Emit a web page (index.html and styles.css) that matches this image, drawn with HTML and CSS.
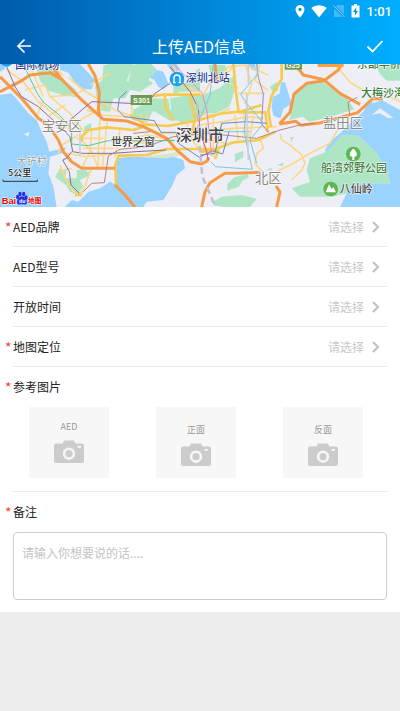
FILE: index.html
```
<!DOCTYPE html>
<html lang="zh-CN">
<head>
    <meta charset="UTF-8">
    <meta name="viewport" content="width=device-width, initial-scale=1">
    <title>上传AED信息</title>
    <link rel="stylesheet" href="styles.css">
</head>
<body>
    <header class="header">
        <div class="status">
            <svg width="10" height="14" viewBox="0 0 10 14"><path fill="#fff" fill-rule="evenodd" d="M5 1a4.500 4.500 0 0 0-4.500 4.500C.5 9 5 13.500 5 13.500S9.500 9 9.500 5.500A4.500 4.500 0 0 0 5 1zm0 2.800a1.700 1.700 0 1 1 0 3.400 1.700 1.700 0 0 1 0-3.400z"/></svg>
            <svg width="16" height="14" viewBox="0 0 16 14"><path fill="#fff" d="M8 13.500L.3 4C4.500.3 11.500.3 15.700 4z"/></svg>
            <svg width="12" height="14" viewBox="0 0 12 14"><path fill="#48b7f7" d="M4.500 1H11v9.500L3 2.500zM1 4.500l8.500 8.500H1z"/><path stroke="#8bd2fb" d="M.5 1.500l11 11.500"/></svg>
            <svg width="9" height="14" viewBox="0 0 9 14"><path fill="#fff" d="M3 0h3v1.500h2.500V13.500H.5V1.500H3z"/><path fill="#0098eb" d="M5.200 3.500L2 8h2v3.500L7 7H5.200z"/></svg>
            <span class="time">1:01</span>
        </div>
        <div class="nav">
            <button type="button" class="nav-btn" aria-label="返回">
                <svg width="16" height="16" viewBox="0 0 16 16"><path fill="none" stroke="#fff" stroke-width="1.700" d="M15 8H2M8.500 1.500L2 8l6.500 6.500"/></svg>
            </button>
            <h1>上传AED信息</h1>
            <button type="button" class="nav-btn" aria-label="提交">
                <svg width="18" height="16" viewBox="0 0 18 16"><path fill="none" stroke="#fff" stroke-width="1.800" d="M1.500 8.500l5 5L16.500 3"/></svg>
            </button>
        </div>
    </header>

    <svg class="map" viewBox="0 12 1200 429" preserveAspectRatio="xMidYMid slice">
        <rect y="12" width="1200" height="429" fill="#eeeff6"/>
        <!-- sea and lakes -->
        <g fill="#9bd3ff">
            <path d="M0 105l35-5 25 30 25 30 25 20 15 35 15 30 8 30 22-5 30-8-15 18-35 10-5 50 15 40 10 61H0z"/>
            <path d="M195 441l20-21 20 5 30-30 35-10 30-20 20 10v-80l40-5 50 2 40-7 40 5 30 10 5 25-25 20-15 35-25 40-50 5-10 16z"/>
            <path d="M1200 150l-55-30-20 8-20-3-15 30-35 30-30 30-35 30-15 25 5 15 50-60h40l30 25 30 30 30 50 10 40-70 0-40 5-20 25-20 41h185z"/>
            <path d="M180 12h60l45 48-10 28-25 0-25-20-20-30-25-8zM0 12h15v15L0 35zM340 80l15-5 15 20-20 5zM470 30l20 5 15 35-15 18-15-8-12-20-18-10zM818 110l20-8 5-35 12 0 20 65-25 15-8 28-22-8-5-25zM508 150l40-3-10 12h-20zM745 12h20l5 22-15-5z"/>
        </g>
        <path fill="#eeeff6" d="M72 222l16-6-3 14zM1115 165l25-20 40 28-15 2-25-15zM218 230l15 0v40l-12 0z"/>
        <!-- hills and parks -->
        <g fill="#aee5c4">
            <path d="M105 12h50l25 40 45 35 12 25-42-5-50-15-25-30zM285 78l22-18 3-45 30-3 45 55 10-50 50-17 25 30-25 30 15 10-40 25-30-5-15 25-35 0-10 40-35-5zM320 12h80l-20 50z"/>
            <path d="M520 75l50-10 20-35 10-5v70h-60l-20 10zM395 180l5-30 60-35 45 2 5 30 30 35-30 0-50-30-20 35zM510 115l60-10h40l5 60-70 25-30-25zM608 105l50-20 45-40 0 50-15 45-40 20-40 0zM625 15h50l10 25-30 20-20 0z"/>
            <path d="M880 130l8-35 35-22 50-5 30 20 40 30 20 30-80 25-55 12-20-15-40 10zM810 80l20-15 5 25-15 10zM1130 22l20-10h50v50l-40 0-20-20z"/>
            <path d="M875 385l55-20-10-35 10-35 50-20 45-50h45l30 25 30 30 30 50 10 40h-70l-40 5-20 25-40 10H900z"/>
            <path d="M165 350l15-25 20 10-5 20h35v-25h30v20l-20 10 10 20-20 25-20-10-10-18zM250 342l20-10-5 20zM640 425l25-15 60-5 45 12-20 24h-80l-30-5zM682 372l20-20 40-10 5 10-20 10-10 18-35 12zM705 282l25-10 0 20-25 15zM252 200l22-12 0 15-22 12zM830 315l22-8-5 12zM800 330l15-8 0 10zM870 230l12 2-8 14zM1150 330l20 5-15 12z"/>
        </g>
        <path fill="#9bd3ff" d="M1055 275l15-5 5 10-20 5zM1040 395l30-15 25 0 0 12-40 15zM1140 395l25-15 20 5-35 15zM500 12h30l10 18-25 5z"/>
        <path fill="#d8e8c8" d="M435 292l60-10 35-5 8 10-38 8z"/>
        <!-- small roads -->
        <g fill="none" stroke="#fad88a" stroke-width="5" stroke-linejoin="round">
            <path d="M20 30l50 35 45 60 75 60 25 35M75 90l60-15 15 35 60 50 45 60M95 30l35 80M150 12l40 35M150 110l70-5 30-15M150 165l45-30M130 120l-20 50M180 200l60-20 70-40M235 225l-50 30-10 25M245 240l30 35 20 50M275 205l-5 70-25 50M300 175l-5 100 0 50M322 180l-15 145M230 235h80M250 265h90M200 280l60 10 85-10M360 210l-15 80M345 235l120 20M180 315l20 50 30 40 20-15M215 325l-40 10M245 405l20-55 10-25M260 150l40 15 80 5"/>
            <path d="M205 52l45 38 95 60 55 20M270 75l60-35M420 160l10 40 50 20 50 0M440 160v40M395 115l0 55M380 240l60-15 80 15M520 12l20 60 60 25M560 190l15 50 25 30M620 190l-10 80M600 215l100-10 130-5M600 195l70-10 70-15 50 5M640 170v120M665 190l-10 60M705 165l10 75M730 150l10 90M760 165l-10 70M600 235l80 15M640 50l-30 55M655 50l60 35M700 12l-10 20-45 30"/>
            <path d="M665 45l20-25 50-5 70 30M735 12l20 60-20 60M780 12l-15 50 40 30M715 100l80 0M690 145l-40 20-50 0M780 235l10 30-20 15-5 30 25 30M1005 12l45 55 50 30M840 220l5 20 25 15 35 30 10 25-10 20-30 30M820 340l60-30 50-30 60-30 25-45M800 375l20-20M1170 110l30 15"/>
        </g>
        <!-- main roads -->
        <g fill="none" stroke="#f6cb50" stroke-width="8" stroke-linejoin="round">
            <path d="M245 245v-15l20-20 55-8 80 8 30-10M348 375l-2-60 10-28 85-2 60-18 100 0 45 0 55-20 75-7 50-25M390 165l45 28 70 5 100-20 60-18 55-5 65-20M412 112l80-8 110 0M495 105v35l25 40M570 110l15 65-10 50M700 12l8 85 8 60 80 0 8 60M845 12v45l-30 50-10 45 8 50M600 275l55-3-10 25M225 405l20 0"/>
        </g>
        <g fill="none" stroke="#f69a48" stroke-width="9" stroke-linejoin="round">
            <path d="M0 95l60-30 30-20 60-7 35 20 55 57 50 45 20 18 70 5 50 17 70 35 30 35 40 35 35 7 18-10 2-10M265 12l20 35 13 50-3 50 5 20M0 50l25 25 40 40 50 60 30 20 30 45 15 35 25 30 30 20h100M345 375l30 30 30 36M645 12l5 60"/>
            <path d="M605 441l10-45 15-28 45-28h35l70-3M890 20l20 25 65 15 40-30 10-18M838 192l32-35 12-55 38-32 55-8 45 38 60 33M838 192l50-8 15 12 60-8 110-30 45-42 30 0M828 378l12 18-10 45M150 12l35 46"/>
        </g>
        <!-- metro -->
        <g fill="none" stroke-width="3" stroke-linejoin="round">
            <path stroke="#8d6d98" d="M20 20l25 60 20 30 50 30 60 55 35 35 8 45 30 5 90 0 70-5 90-5M215 275l-15 20-12 5 20 35 5 40 25 25M210 180l65-55 115 5 60-10 15-20 45-30"/>
            <path stroke="#5cc98b" d="M70 12l40 85 20 30 50 40 35 40 0 45 50 5 60-15 50 0 60 0 90 0"/>
            <path stroke="#6f86c4" d="M380 95l-22 20-5 35 20 20 90 12 20 35 45 0 10 35 60 40 40-20 30 10 20-70M600 285l45-5 20-90 75-5 60 5"/>
            <path stroke="#b78585" d="M250 395l25-25 38-2 12-80 35-20 80-8 80-30 100-10 150 15 70-25 60-15 40-5M1072 112l-28 15 5 35M400 220l50-5"/>
            <path stroke="#d65472" d="M510 20l60 75 25 50 5 70 20 60 5 25"/>
            <path stroke="#e888bd" d="M520 12l85 85 15 50 15 140"/>
            <path stroke="#a884be" d="M770 12l5 40 15 50-5 90 20 25"/>
            <path stroke="#79c7e3" d="M600 175l30-70 10-93M632 305l15 15 110 8-15-65-10-50 10-80-20-30 50-60 0-38M740 130l50 60-40 50 20 70M600 215h150"/>
        </g>
        <path fill="none" stroke="#cdbfc6" stroke-width="8" stroke-dasharray="20 12" d="M592 130l5 110 10 110 40 91"/>
        <path fill="none" stroke="#cfcfd8" stroke-width="5" d="M745 12v60M740 100l5 200M240 205v80"/>

        <g class="map-labels">
            <rect x="392" y="105" width="64" height="30" fill="#6c9b52"/>
            <text x="399" y="128" class="road-no">S301</text>
            <rect x="854" y="0" width="52" height="29" fill="#6c9b52"/>
            <text x="858" y="24" class="road-no">G25</text>
            <rect x="953" y="0" width="78" height="21" fill="#f9a13f"/>
            <circle cx="20" cy="-1" r="21" fill="#1ba1f2"/>
            <text x="46" y="26" class="station">国际机场</text>
            <circle cx="531" cy="57" r="22" fill="#1ba1f2"/>
            <path d="M522 67V54a9 9 0 0 1 18 0v13M519 68h8M535 68h8" fill="none" stroke="#fff" stroke-width="4"/>
            <text x="557" y="67" class="station">深圳北站</text>
            <text x="125" y="212" class="district">宝安区</text>
            <text x="765" y="370" class="district">北区</text>
            <text x="969" y="203" class="district">盐田区</text>
            <text x="333" y="258" class="place">世界之窗</text>
            <text x="528" y="243" class="city">深圳市</text>
            <text x="50" y="315" class="village">大铲村</text>
            <text x="1070" y="24" class="park">东部华侨城</text>
            <text x="1083" y="110" class="park">大梅沙海滨</text>
            <circle cx="1060" cy="282" r="22" fill="#5eb653"/>
            <path d="M1060 266c-12 8-15 24-3 24v10h6v-10c12 0 9-16-3-24z" fill="#fff"/>
            <text x="963" y="336" class="park">船湾郊野公园</text>
            <circle cx="992" cy="387" r="22" fill="#5eb653"/>
            <path d="M977 397l10-24 8 14 5-6 8 16z" fill="#fff"/>
            <text x="1019" y="398" class="place">八仙岭</text>
            <text x="24" y="349" class="scale">5公里</text>
            <path d="M9 359v5h103v-5" fill="none" stroke="#333" stroke-width="3"/>
            <text x="5" y="431" class="baidu">Bai</text>
            <g fill="#2932e1">
                <ellipse cx="53" cy="411" rx="5" ry="7"/>
                <ellipse cx="60" cy="402" rx="5" ry="7"/>
                <ellipse cx="71" cy="402" rx="5" ry="7"/>
                <ellipse cx="78" cy="413" rx="5" ry="7"/>
                <path d="M66 409c8 0 17 14 15 20-3 7-9 4-15 4s-13 3-15-4 7-20 15-20z"/>
            </g>
            <text x="57" y="430" class="baidu-du">du</text>
            <text x="84" y="430" class="baidu-map">地图</text>
        </g>
    </svg>

    <form class="form">
        <div class="row required">
            <label for="brand">AED品牌</label>
            <button type="button" id="brand" class="picker">请选择<svg width="8" height="12" viewBox="0 0 8 12"><path d="M1 1l5 5-5 5"/></svg></button>
        </div>
        <div class="row">
            <label for="model">AED型号</label>
            <button type="button" id="model" class="picker">请选择<svg width="8" height="12" viewBox="0 0 8 12"><path d="M1 1l5 5-5 5"/></svg></button>
        </div>
        <div class="row">
            <label for="openTime">开放时间</label>
            <button type="button" id="openTime" class="picker">请选择<svg width="8" height="12" viewBox="0 0 8 12"><path d="M1 1l5 5-5 5"/></svg></button>
        </div>
        <div class="row required">
            <label for="location">地图定位</label>
            <button type="button" id="location" class="picker">请选择<svg width="8" height="12" viewBox="0 0 8 12"><path d="M1 1l5 5-5 5"/></svg></button>
        </div>

        <div class="photos">
            <h2 class="required">参考图片</h2>
            <div class="photo-list">
                <button type="button" class="photo photo-aed">
                    <span>AED</span>
                    <svg width="30" height="23" viewBox="0 0 30 23"><path fill="#ccc" fill-rule="evenodd" d="M2 3.500h6.500L10 .5h10l1.500 3H28a2 2 0 0 1 2 2V21a2 2 0 0 1-2 2H2a2 2 0 0 1-2-2V5.500a2 2 0 0 1 2-2zM15 7.500a6.200 6.200 0 1 0 0 12.400 6.200 6.200 0 0 0 0-12.400zM23.500 6v1.700H27V6z"/><circle cx="15" cy="13.700" r="3.600" fill="#ccc"/></svg>
                </button>
                <button type="button" class="photo">
                    <span>正面</span>
                    <svg width="30" height="23" viewBox="0 0 30 23"><path fill="#ccc" fill-rule="evenodd" d="M2 3.500h6.500L10 .5h10l1.500 3H28a2 2 0 0 1 2 2V21a2 2 0 0 1-2 2H2a2 2 0 0 1-2-2V5.500a2 2 0 0 1 2-2zM15 7.500a6.200 6.200 0 1 0 0 12.400 6.200 6.200 0 0 0 0-12.400zM23.500 6v1.700H27V6z"/><circle cx="15" cy="13.700" r="3.600" fill="#ccc"/></svg>
                </button>
                <button type="button" class="photo">
                    <span>反面</span>
                    <svg width="30" height="23" viewBox="0 0 30 23"><path fill="#ccc" fill-rule="evenodd" d="M2 3.500h6.500L10 .5h10l1.500 3H28a2 2 0 0 1 2 2V21a2 2 0 0 1-2 2H2a2 2 0 0 1-2-2V5.500a2 2 0 0 1 2-2zM15 7.500a6.200 6.200 0 1 0 0 12.400 6.200 6.200 0 0 0 0-12.400zM23.500 6v1.700H27V6z"/><circle cx="15" cy="13.700" r="3.600" fill="#ccc"/></svg>
                </button>
            </div>
        </div>

        <div class="remark">
            <label for="remark" class="required">备注</label>
            <textarea id="remark" name="remark" placeholder="请输入你想要说的话...."></textarea>
        </div>
    </form>
</body>
</html>
```
FILE: styles.css
```
* {
    box-sizing: border-box;
}

body {
    margin: 0;
    background-color: #ededed;
    color: #222;
    font-family: "Noto Sans CJK SC", sans-serif;
    font-size: 12px;
}

button,
textarea {
    font-family: inherit;
    font-size: inherit;
}

button {
    padding: 0;
    border: none;
    background: none;
    cursor: pointer;
}

svg {
    display: block;
}

.header {
    height: 64px;
    background: linear-gradient(to right, #005bac, #00aeff);
    color: #fff;
}

.status {
    display: flex;
    justify-content: flex-end;
    align-items: center;
    gap: 6px;
    height: 22px;
    padding-right: 8px;
}

.time {
    font-family: Roboto, sans-serif;
    font-size: 13px;
    font-weight: 500;
}

.nav {
    display: flex;
    justify-content: space-between;
    align-items: center;
    height: 48px;
    padding: 0 16px;
}

.nav h1 {
    margin: 0;
    font-size: 16px;
    font-weight: 400;
}

.map {
    width: 100%;
    height: 143px;
}

.map-labels text {
    stroke: #fff;
    stroke-width: 3px;
    stroke-linejoin: round;
    paint-order: stroke;
    font-size: 33px;
    font-weight: 500;
}

.map-labels .station {
    fill: #30479b;
}

.map-labels .district {
    fill: #8a8a8a;
    font-size: 40px;
    font-weight: 400;
}

.map-labels .place {
    fill: #444;
}

.map-labels .city {
    fill: #444;
    font-size: 48px;
}

.map-labels .village {
    fill: #8d9c9c;
    font-size: 30px;
    font-weight: 400;
}

.map-labels .park {
    fill: #3b7d3c;
}

.map-labels .scale {
    fill: #222;
    font-size: 27px;
}

.map-labels .road-no {
    fill: #fff;
    stroke: none;
    font-family: "Liberation Sans", sans-serif;
    font-size: 22px;
    font-weight: 700;
}

.map-labels .baidu {
    fill: #e10602;
    font-family: "Liberation Sans", sans-serif;
    font-size: 28px;
    font-weight: 700;
}

.map-labels .baidu-du {
    fill: #fff;
    stroke: none;
    font-family: "Liberation Sans", sans-serif;
    font-size: 16px;
    font-weight: 700;
}

.map-labels .baidu-map {
    fill: #e10602;
    font-size: 20px;
    font-weight: 700;
}

.form {
    padding: 0 13px 12px;
    background-color: #fff;
}

.row {
    display: flex;
    justify-content: space-between;
    align-items: center;
    height: 40px;
    border-bottom: 1px solid #ebebeb;
}

.required {
    position: relative;
}

.required::before {
    content: "*";
    position: absolute;
    left: -8px;
    color: #f44336;
    font-size: 14px;
}

.picker {
    display: flex;
    align-items: center;
    gap: 8px;
    padding-right: 7px;
    color: #c8c8c8;
}

.picker path {
    fill: none;
    stroke: #c0c0c0;
    stroke-width: 2px;
}

.photos {
    padding-bottom: 13px;
    border-bottom: 1px solid #ebebeb;
}

.photos h2 {
    margin: 0;
    font-size: 12px;
    font-weight: 400;
    line-height: 40px;
}

.photo-list {
    display: flex;
    justify-content: space-between;
    padding: 0 24px 0 16px;
}

.photo {
    display: flex;
    flex-direction: column;
    align-items: center;
    gap: 6px;
    width: 80px;
    height: 71px;
    padding-top: 15px;
    background-color: #f7f7f7;
    color: #999;
    font-size: 9px;
    line-height: 15px;
}

.photo-aed {
    padding-top: 12px;
}

.remark label {
    display: block;
    line-height: 40px;
}

.remark textarea {
    display: block;
    width: 100%;
    height: 68px;
    padding: 11px 8px;
    border: 1px solid #ccc;
    border-radius: 4px;
    resize: none;
    outline: none;
}

.remark textarea::placeholder {
    color: #c4c4c4;
}
```
